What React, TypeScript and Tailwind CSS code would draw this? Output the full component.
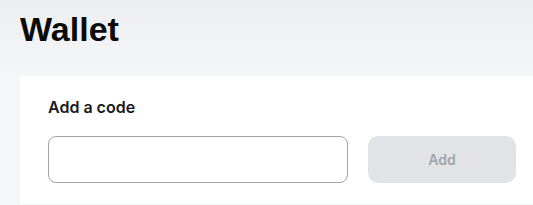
export default function App() {
  return (
    <div className="min-h-screen bg-[#f5f6f8] font-['Inter',sans-serif]">
      <div className="bg-gradient-to-b from-[#eceef0] to-[#f5f6f8] pl-5">
        {/* Page title */}
        <h1 className="pt-[9px] pb-[27px] font-['Liberation_Sans',Arial,sans-serif] text-[34px] font-bold leading-[40px] text-[#0b0b0b]">
          Wallet
        </h1>
      </div>

      {/* Code card */}
      <div className="ml-5 bg-white pl-7 pt-[19px] pb-[21px]">
        <h2 className="text-[16px] font-semibold leading-6 text-[#1a1a1a]">Add a code</h2>
        <div className="mt-[17px] flex items-center gap-5">
          <input
            type="text"
            className="h-[47px] w-[300px] rounded-lg border border-[#a3a3a3] bg-white px-3 text-sm outline-none"
          />
          <button
            disabled
            className="h-[47px] w-[148px] rounded-[10px] bg-[#e1e3e6] text-[14px] font-semibold text-[#a1a5ab]"
          >
            Add
          </button>
        </div>
      </div>
    </div>
  );
}
